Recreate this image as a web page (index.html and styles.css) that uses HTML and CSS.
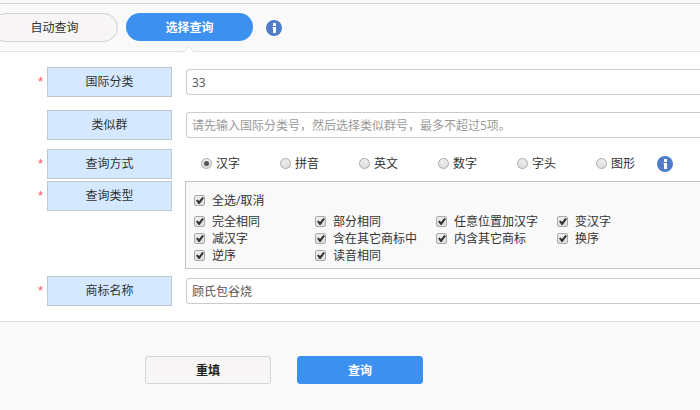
FILE: index.html
```html
<!doctype html>
<html lang="zh-CN">
<head>
<meta charset="utf-8">
<meta name="viewport" content="width=device-width, initial-scale=1.0">
<link rel="stylesheet" href="styles.css">
<title>选择查询</title>
</head>
<body>
<div class="tabs">
<button type="button" class="tab">自动查询</button>
<button type="button" class="tab active">选择查询</button>
<svg class="info halo" viewBox="0 0 16 16" aria-hidden="true"><circle cx="8" cy="8" r="8"/><path d="M7 3h3v3H7zM6.5 7H10v6H7V8h-.5z"/></svg>
</div>

<form>
<div class="fields">
<div class="row">
<span class="star">*</span>
<label class="name" for="intcls">国际分类</label>
<input class="text" type="text" id="intcls" value="33">
</div>
<div class="row group-row">
<span class="star"></span>
<label class="name" for="simgroup">类似群</label>
<input class="text" type="text" id="simgroup" placeholder="请先输入国际分类号，然后选择类似群号，最多不超过5项。">
</div>
<div class="row mode-row">
<span class="star">*</span>
<span class="name" id="mode">查询方式</span>
<div class="modes" role="radiogroup" aria-labelledby="mode">
<label><input type="radio" name="mode" checked>汉字</label>
<label><input type="radio" name="mode">拼音</label>
<label><input type="radio" name="mode">英文</label>
<label><input type="radio" name="mode">数字</label>
<label><input type="radio" name="mode">字头</label>
<label><input type="radio" name="mode">图形</label>
<svg class="info" viewBox="0 0 16 16" aria-hidden="true"><circle cx="8" cy="8" r="8"/><path d="M7 3h3v3H7zM6.5 7H10v6H7V8h-.5z"/></svg>
</div>
</div>
<div class="row type-row">
<span class="star">*</span>
<span class="name" id="type">查询类型</span>
<div class="types" role="group" aria-labelledby="type">
<label class="all"><input type="checkbox" checked>全选/取消</label>
<div class="type-list">
<label><input type="checkbox" checked>完全相同</label>
<label><input type="checkbox" checked>部分相同</label>
<label><input type="checkbox" checked>任意位置加汉字</label>
<label><input type="checkbox" checked>变汉字</label>
<label><input type="checkbox" checked>减汉字</label>
<label><input type="checkbox" checked>含在其它商标中</label>
<label><input type="checkbox" checked>内含其它商标</label>
<label><input type="checkbox" checked>换序</label>
<label><input type="checkbox" checked>逆序</label>
<label><input type="checkbox" checked>读音相同</label>
</div>
</div>
</div>
<div class="row mark-row">
<span class="star">*</span>
<label class="name" for="mark">商标名称</label>
<input class="text" type="text" id="mark" value="顾氏包谷烧">
</div>
</div>

<div class="actions">
<button type="reset" class="btn">重填</button>
<button type="submit" class="btn primary">查询</button>
</div>
</form>
</body>
</html>
```

FILE: styles.css
```css
* {
    box-sizing: border-box;
}
body {
    margin: 0;
    padding-top: 3px;
    font-family: "Open Sans", "Noto Sans CJK SC", sans-serif;
    font-size: 12px;
    line-height: 17px;
    color: #333;
    background-color: #f9f9f9;
    overflow-x: hidden;
}
button,
input {
    font: inherit;
    margin: 0;
}

/* tabs */
.tabs {
    display: flex;
    align-items: flex-start;
    gap: 8px;
    height: 49px;
    padding-top: 9px;
    border-top: 1px solid #d4d4d4;
    border-bottom: 1px solid #e2e2e2;
}
.tab {
    position: relative;
    width: 127px;
    height: 29px;
    padding: 0;
    border: 1px solid #d0d0d0;
    border-radius: 15px;
    color: #333;
    background-color: #f7f5f5;
}
.tab:first-child {
    margin-left: -9px;
}
.tab.active {
    height: 28px;
    border: 0;
    font-weight: bold;
    color: #fff;
    background-color: #3b90f0;
}
.tab.active:after {
    content: "";
    position: absolute;
    left: 58px;
    top: 35px;
    width: 9px;
    height: 9px;
    border: 1px solid #e2e2e2;
    border-width: 1px 0 0 1px;
    background-color: #fff;
    transform: rotate(45deg);
    clip-path: polygon(0 0, 100% 0, 0 100%);
}
.info {
    flex: none;
    width: 16px;
    height: 16px;
    fill: #fff;
}
.info circle {
    fill: #507dcb;
}
.halo {
    margin: 7px 5px;
}

/* fields */
.fields {
    padding: 15px 0;
    background-color: #fff;
    border-bottom: 1px solid #e2e2e2;
}
.row {
    display: grid;
    grid-template-columns: 47px 125px 1fr;
    align-items: start;
}
.group-row {
    margin-top: 13px;
}
.mode-row {
    margin-top: 9px;
}
.type-row {
    margin-top: 2px;
}
.mark-row {
    margin-top: 7px;
}
.star {
    padding: 6px 4px 0 0;
    font-family: "Liberation Sans", sans-serif;
    font-size: 13px;
    text-align: right;
    color: #f55;
}
.name {
    height: 30px;
    border: 1px solid #c0c8ce;
    line-height: 28px;
    text-align: center;
    background-color: #d4e9ff;
}
.text {
    height: 26px;
    margin: 2px 0 0 14px;
    padding: 0 5px;
    border: 1px solid #ccc;
    border-right: 0;
    border-radius: 4px 0 0 4px;
    color: #555;
    background-color: #fff;
}
.text::placeholder {
    color: #999;
    opacity: 1;
}
.modes {
    display: flex;
    align-items: center;
    height: 29px;
    padding-left: 29px;
}
.modes label {
    display: flex;
    align-items: center;
    gap: 4px;
    width: 79px;
}
.modes .info {
    margin-left: -18px;
}
.types {
    height: 88px;
    margin-left: 13px;
    padding: 10px 8px 0;
    border: 1px solid #c4c4c4;
    border-right: 0;
    background-color: #f9f9f9;
}
.types label {
    display: flex;
    align-items: center;
    gap: 7px;
}
.type-list {
    display: grid;
    grid-template-columns: repeat(4, 121px);
    margin-top: 4px;
}

/* radios and tick boxes */
input[type=radio],
input[type=checkbox] {
    appearance: none;
    position: relative;
    flex: none;
    width: 11px;
    height: 11px;
    border: 1px solid #aaa;
    border-radius: 2px;
    background: linear-gradient(#eee, #ddd);
}
input[type=radio] {
    border-radius: 50%;
}
input[type=radio]:checked:before {
    content: "";
    position: absolute;
    left: 2px;
    top: 2px;
    width: 5px;
    height: 5px;
    border-radius: 50%;
    background-color: #555;
}
/* tick */
input[type=checkbox]:checked:before {
    content: "";
    position: absolute;
    left: 1px;
    top: 1px;
    width: 8px;
    height: 7px;
    background-color: #333;
    clip-path: polygon(0 50%, 18% 36%, 38% 58%, 78% 0, 100% 14%, 44% 100%, 32% 100%);
}

/* buttons */
.actions {
    display: flex;
    gap: 26px;
    padding: 34px 0 26px 145px;
}
.btn {
    width: 126px;
    height: 28px;
    padding: 0;
    border: 1px solid #d4d4d4;
    border-radius: 3px;
    font-weight: bold;
    color: #222;
    background-color: #f7f5f5;
}
.btn.primary {
    border-color: #3b90f0;
    color: #fff;
    background-color: #3b90f0;
}
```
